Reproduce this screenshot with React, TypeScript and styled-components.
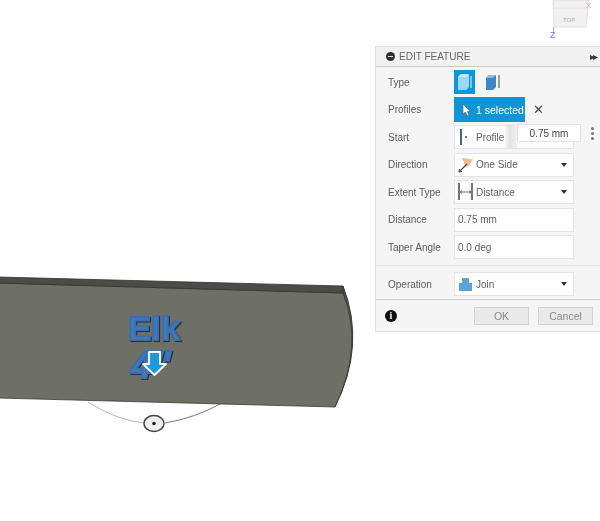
import styled, { createGlobalStyle } from 'styled-components';

const GlobalStyle = createGlobalStyle`
  html, body { margin: 0; padding: 0; background: #fff; }
  body { font-family: 'Liberation Sans', Arial, sans-serif; }
`;

const ModelDrawing = () => (
  <ModelSvg viewBox="0 0 600 521" width="600" height="521">
    <defs>
      <linearGradient id="letters" x1="0" y1="0" x2="0" y2="1">
        <stop offset="0.55" stopColor="#3f78bb" />
        <stop offset="0.9" stopColor="#66798c" />
      </linearGradient>
    </defs>
    <path d="M88 402 Q116 420 144 423" fill="none" stroke="#b5b5b5" strokeWidth="1" />
    <path d="M165 423 Q195 418 222 403" fill="none" stroke="#777" strokeWidth="1" />
    <ellipse cx="154" cy="423.5" rx="10" ry="8" fill="#eeeeee" stroke="#444" strokeWidth="1.4" />
    <circle cx="154" cy="423.5" r="1.8" fill="#222" />
    <path d="M343 286 Q366 345 335 407 Z" fill="#4b4c47" stroke="#3a3b37" strokeWidth="1" />
    <path d="M-2 283 L343 293 Q364 345 335 407 L-2 398 Z" fill="#6e7066" stroke="#3a3b37" strokeWidth="0.8" />
    <path d="M-2 277 L343 286 L343 293 L-2 283 Z" fill="#4b4c47" stroke="#33342f" strokeWidth="0.8" />
    <ModelLabels>
      <text x="128" y="340" fontSize="33" textLength="52" lengthAdjust="spacingAndGlyphs" fill="url(#letters)" stroke="#3a6fae" strokeWidth="1.8">Elk</text>
      <text x="131" y="378" fontSize="38" fontStyle="italic" textLength="40" lengthAdjust="spacingAndGlyphs" fill="url(#letters)" stroke="#3a6fae" strokeWidth="1.8">4"</text>
    </ModelLabels>
    <path d="M149 352 H160 V364 H166 L154.5 375 L143 364 H149 Z" fill="#1b9ae0" stroke="#fff" strokeWidth="1.8" strokeLinejoin="round" />
  </ModelSvg>
);

const ViewCubeDrawing = () => (
  <ViewCubeSvg viewBox="0 0 60 45" width="60" height="45">
    <path d="M13 0 L49 0 L46 27 L14 27 Z" fill="#f1f1f1" stroke="#e0e0e0" />
    <path d="M13 8 L47 8" stroke="#e4e4e4" />
    <text x="23" y="22" fontSize="6" fill="#aaa" fontFamily="'Liberation Sans', Arial, sans-serif">TOP</text>
    <text x="46" y="8" fontSize="8" fill="#e9a0a0" fontFamily="'Liberation Sans', Arial, sans-serif">X</text>
    <text x="10" y="38" fontSize="9" fill="#7a72d8" fontFamily="'Liberation Sans', Arial, sans-serif">Z</text>
    <path d="M14 27 L13 32" stroke="#a9a4e8" />
  </ViewCubeSvg>
);

const ExtrudeOne = () => (
  <svg width="16" height="18" viewBox="0 0 16 18">
    <path d="M1 4 L4 1 H12 V14 L9 17 H1 Z" fill="#9fd6f5" />
    <path d="M9 4 H1 L4 1 H12 Z" fill="#c9e9fa" />
    <path d="M14 3 V15" stroke="#dff2fc" strokeWidth="1" />
  </svg>
);

const ExtrudeTwo = () => (
  <svg width="16" height="18" viewBox="0 0 16 18">
    <path d="M1 5 L4 2 H11 V14 L8 17 H1 Z" fill="#3d87c7" />
    <path d="M8 5 H1 L4 2 H11 Z" fill="#8cbde3" />
    <path d="M14 2 V15" stroke="#444" strokeWidth="1" />
  </svg>
);

const ProfileIcon = () => (
  <svg width="16" height="16" viewBox="0 0 16 16">
    <path d="M3 0 V16" stroke="#1d2c55" strokeWidth="1.5" />
    <circle cx="8" cy="8" r="1" fill="#444" />
  </svg>
);

const SideIcon = () => (
  <svg width="16" height="16" viewBox="0 0 16 16">
    <path d="M4 1 L15 2.5 L11 8 L8 10.5 Z" fill="#eeb98d" />
    <path d="M1 15 L9 7" stroke="#444" strokeWidth="1.1" />
    <path d="M1 15 L1.5 12 M1 15 L4 14.5" stroke="#444" strokeWidth="1" />
  </svg>
);

const DistanceIcon = () => (
  <svg width="16" height="18" viewBox="0 0 16 18">
    <path d="M1 0 V17 M14 0 V17" stroke="#1d2c55" strokeWidth="1.3" />
    <path d="M2 9 H13 M2 9 L4 7.5 M2 9 L4 10.5 M13 9 L11 7.5 M13 9 L11 10.5" stroke="#555" strokeWidth="0.8" fill="none" />
  </svg>
);

const JoinIcon = () => (
  <svg width="15" height="15" viewBox="0 0 15 15">
    <path d="M4 1 H11 V6 H14 V14 H1 V6 H4 Z" fill="#5ba3d8" />
  </svg>
);

const CursorIcon = () => (
  <svg width="11" height="14" viewBox="0 0 11 14">
    <path d="M2 1 V11 L4.5 9 L6 13 L8 12 L6.5 8.5 H9.5 Z" fill="#fff" stroke="#555" strokeWidth="0.6" />
  </svg>
);

const rows = [
  { label: 'Direction', text: 'One Side', icon: <SideIcon />, select: true },
  { label: 'Extent Type', text: 'Distance', icon: <DistanceIcon />, select: true },
  { label: 'Distance', text: '0.75 mm', select: false },
  { label: 'Taper Angle', text: '0.0 deg', select: false },
];

const App = () => (
  <Canvas>
    <GlobalStyle />
    <ModelDrawing />
    <ViewCubeDrawing />
    <Panel>
      <Header>
        <HeaderTitle>
          <MinusDot />
          EDIT FEATURE
        </HeaderTitle>
        <Expand>▸▸</Expand>
      </Header>
      <Body>
        <Row>
          <Label>Type</Label>
          <IconButton $active>
            <ExtrudeOne />
          </IconButton>
          <IconButton>
            <ExtrudeTwo />
          </IconButton>
        </Row>
        <Row>
          <Label>Profiles</Label>
          <SelectedButton>
            <CursorIcon />1 selected
          </SelectedButton>
          <ClearMark>✕</ClearMark>
        </Row>
        <Row>
          <Label>Start</Label>
          <Field>
            <IconSlot>
              <ProfileIcon />
            </IconSlot>
            Profile
          </Field>
        </Row>
        {rows.map((row) => (
          <Row key={row.label}>
            <Label>{row.label}</Label>
            <Field>
              {row.icon && <IconSlot>{row.icon}</IconSlot>}
              {row.text}
              {row.select && <Caret />}
            </Field>
          </Row>
        ))}
      </Body>
      <OperationSection>
        <Row>
          <Label>Operation</Label>
          <Field>
            <IconSlot>
              <JoinIcon />
            </IconSlot>
            Join
            <Caret />
          </Field>
        </Row>
      </OperationSection>
      <Footer>
        <InfoDot>i</InfoDot>
        <FooterButton>OK</FooterButton>
        <FooterButton>Cancel</FooterButton>
      </Footer>
      <ValueTip>0.75 mm</ValueTip>
      <TipDots>
        <i />
        <i />
        <i />
      </TipDots>
    </Panel>
  </Canvas>
);

export default App;

const Canvas = styled.div`
  position: relative;
  width: 600px;
  height: 521px;
  overflow: hidden;
  background: #fff;
  filter: blur(0.35px);
`;

const ModelSvg = styled.svg`
  position: absolute;
  left: 0;
  top: 0;
`;

const ModelLabels = styled.g`
  font-family: 'Liberation Sans', Arial, sans-serif;
  font-weight: 700;
  filter: drop-shadow(1px 1.5px 0 #22303e);
`;

const ViewCubeSvg = styled.svg`
  position: absolute;
  left: 540px;
  top: 0;
  filter: blur(0.5px);
`;

const Panel = styled.div`
  position: absolute;
  left: 375px;
  top: 46px;
  width: 240px;
  height: 286px;
  display: flex;
  flex-direction: column;
  background: #f5f5f5;
  border: 1px solid #e2e2e2;
  box-sizing: border-box;
  color: #5a5a5a;
  font-size: 10px;
`;

const Header = styled.div`
  height: 20px;
  box-sizing: border-box;
  display: flex;
  align-items: center;
  justify-content: space-between;
  padding: 0 18px 0 10px;
  background: #f1f1f1;
  border-bottom: 1px solid #c9c9c9;
`;

const HeaderTitle = styled.div`
  display: flex;
  align-items: center;
  gap: 4px;
  font-size: 10px;
  color: #666;
`;

const MinusDot = styled.span`
  width: 9px;
  height: 9px;
  border-radius: 50%;
  background: #2e2e2e;
  position: relative;
  &::after {
    content: '';
    position: absolute;
    left: 2px;
    right: 2px;
    top: 4px;
    height: 1px;
    background: #ddd;
  }
`;

const Expand = styled.span`
  font-size: 10px;
  letter-spacing: -2px;
  color: #333;
`;

const Body = styled.div`
  display: flex;
  flex-direction: column;
  gap: 3.5px;
  padding: 3px 0 6px 12px;
  border-bottom: 1px solid #e0e0e0;
  margin-right: 14px;
`;

const Row = styled.div`
  display: flex;
  align-items: center;
  height: 24px;
`;

const Label = styled.div`
  width: 66px;
  flex: none;
`;

const IconButton = styled.div<{ $active?: boolean }>`
  width: 21px;
  height: 24px;
  margin-right: 7px;
  display: flex;
  align-items: center;
  justify-content: center;
  background: ${(props) => (props.$active ? '#0f96d9' : 'transparent')};
`;

const SelectedButton = styled.div`
  width: 71px;
  height: 25px;
  display: flex;
  align-items: center;
  gap: 4px;
  padding-left: 7px;
  box-sizing: border-box;
  background: #0f96d9;
  color: #fff;
  font-size: 10.5px;
  white-space: nowrap;
`;

const ClearMark = styled.span`
  margin-left: 8px;
  font-size: 13px;
  color: #444;
`;

const Field = styled.div`
  position: relative;
  width: 120px;
  height: 24px;
  display: flex;
  align-items: center;
  padding-left: 3px;
  box-sizing: border-box;
  background: #fff;
  border: 1px solid #e4e4e4;
  color: #5f5f5f;
`;

const IconSlot = styled.span`
  width: 18px;
  flex: none;
  display: flex;
  align-items: center;
`;

const Caret = styled.span`
  position: absolute;
  right: 6px;
  top: 9px;
  border-left: 3px solid transparent;
  border-right: 3px solid transparent;
  border-top: 4px solid #333;
`;

const OperationSection = styled.div`
  padding: 6px 0 3px 12px;
  border-bottom: 1px solid #c9c9c9;
`;

const Footer = styled.div`
  flex: 1;
  display: flex;
  align-items: center;
  gap: 9px;
  padding-right: 21px;
  padding-left: 9px;
`;

const InfoDot = styled.span`
  width: 12px;
  height: 12px;
  margin-right: auto;
  border-radius: 50%;
  background: #111;
  color: #fff;
  font: 700 10px/12px 'Liberation Serif', serif;
  text-align: center;
`;

const FooterButton = styled.div`
  width: 55px;
  height: 18px;
  box-sizing: border-box;
  display: flex;
  align-items: center;
  justify-content: center;
  background: #e9e9e9;
  border: 1px solid #d2d2d2;
  color: #8a8a8a;
  font-size: 10.5px;
`;

const ValueTip = styled.div`
  position: absolute;
  left: 141px;
  top: 77px;
  width: 64px;
  height: 18px;
  box-sizing: border-box;
  text-align: center;
  line-height: 17px;
  background: #fff;
  border: 1px solid #e2e2e2;
  color: #444;
  &::before {
    content: '';
    position: absolute;
    left: -15px;
    top: -1px;
    width: 14px;
    height: 24px;
    background: linear-gradient(to right, rgba(225, 225, 225, 0), #e2e2e2 50%, #f2f2f2);
  }
`;

const TipDots = styled.div`
  position: absolute;
  left: 215px;
  top: 80px;
  display: flex;
  flex-direction: column;
  gap: 2px;
  i {
    width: 3px;
    height: 3px;
    background: #777;
    border-radius: 50%;
  }
`;
